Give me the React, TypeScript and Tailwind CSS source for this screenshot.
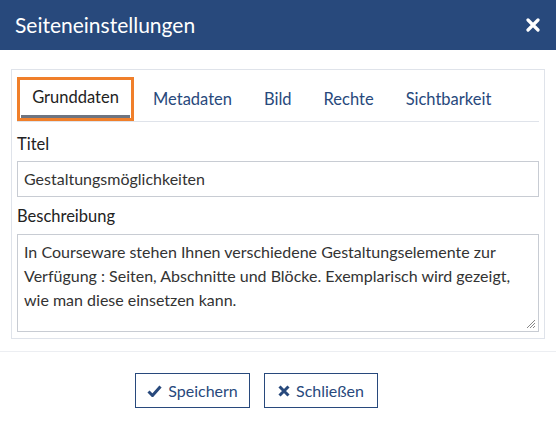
import React from "react";

export default function App() {
  const tabs = ["Metadaten", "Bild", "Rechte", "Sichtbarkeit"];
  return (
    <div className="w-[556px] h-[432px] bg-white text-[#222] overflow-hidden" style={{ fontFamily: "Lato, 'Noto Sans', sans-serif" }}>
      <div className="h-[50px] bg-[#28497c] flex items-center justify-between pl-[15px] pr-[16px]">
        <span className="text-white text-[21px]">Seiteneinstellungen</span>
        <svg width="14" height="14" viewBox="0 0 14 14"><path d="M2 2L12 12M12 2L2 12" stroke="white" strokeWidth="3.2" strokeLinecap="round" /></svg>
      </div>
      <div className="pt-[19px] px-[11px]">
        <div className="border border-[#dfe3ea] pb-[6px] px-[5px]">
          <div className="flex items-end border-b border-[#dfe3ea] pt-[7px]">
            <div className="border-[3px] border-[#f07f2a] h-[44px] w-[117px] flex flex-col">
              <div className="flex-1 flex items-center justify-center text-[16.5px] text-[#222]">Grunddaten</div>
              <div className="h-[3px] bg-[#6e7480] mx-[1px]" />
            </div>
            <div className="flex h-[44px] items-center">
              {tabs.map((t, i) => (
                <span key={t} className={`text-[16.5px] text-[#28497c] ${i === 0 ? "ml-[19px]" : "ml-[32px]"}`}>{t}</span>
              ))}
            </div>
          </div>
          <div className="text-[16.5px] mt-[12px] leading-[20px]">Titel</div>
          <div className="mt-[7px] h-[36px] border border-[#c8ccd3] flex items-center px-[6px] text-[16px] text-[#333]">Gestaltungsmöglichkeiten</div>
          <div className="text-[16.5px] mt-[9px] leading-[20px]">Beschreibung</div>
          <div className="mt-[8px] h-[98px] border border-[#c8ccd3] px-[6px] pt-[5px] text-[16px] text-[#333] leading-[24px] relative">
            In Courseware stehen Ihnen verschiedene Gestaltungselemente zur Verfügung : Seiten, Abschnitte und Blöcke. Exemplarisch wird gezeigt, wie man diese einsetzen kann.
            <svg className="absolute right-[2px] bottom-[2px]" width="10" height="10" viewBox="0 0 10 10"><path d="M9 1L1 9M9 4L4 9M9 7L7 9" stroke="#888" strokeWidth="1" /></svg>
          </div>
        </div>
      </div>
      <div className="mt-[12px] border-t border-[#eceef2]" />
      <div className="flex gap-[14px] mt-[21px] pl-[135px]">
        <button className="h-[35px] w-[115px] border border-[#28497c] flex items-center justify-center gap-[6px] text-[16px] text-[#28497c]">
          <svg width="15" height="12" viewBox="0 0 15 12"><path d="M1.5 6.5L5.5 10.5L13.5 1.5" fill="none" stroke="#28497c" strokeWidth="3" /></svg>
          Speichern
        </button>
        <button className="h-[35px] w-[114px] border border-[#28497c] flex items-center justify-center gap-[6px] text-[16px] text-[#28497c]">
          <svg width="12" height="12" viewBox="0 0 12 12"><path d="M1.5 1.5L10.5 10.5M10.5 1.5L1.5 10.5" stroke="#28497c" strokeWidth="3" /></svg>
          Schließen
        </button>
      </div>
    </div>
  );
}
